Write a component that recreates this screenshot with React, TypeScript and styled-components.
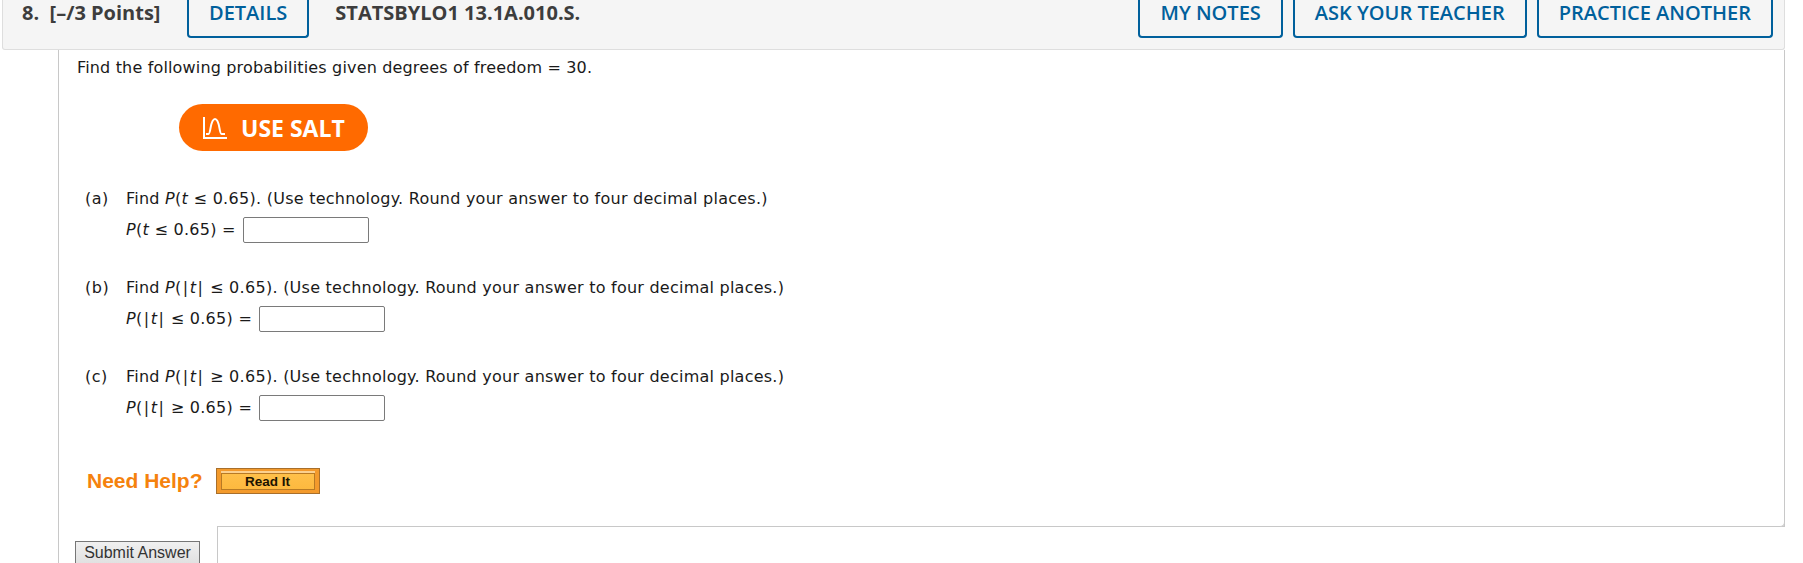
import styled, { createGlobalStyle } from "styled-components";

const Global = createGlobalStyle`
  html, body {
    margin: 0;
    background: #fff;
    overflow: hidden;
  }
`;

const Page = styled.div`
  width: 1803px;
  height: 563px;
  overflow: hidden;
  position: relative;
  box-sizing: border-box;
  padding-left: 2px;
  font-family: "DejaVu Sans", sans-serif;
  font-size: 16px;
  color: #1a1a1a;
`;

const Header = styled.header`
  width: 1783px;
  height: 50px;
  box-sizing: border-box;
  background: #f5f5f5;
  border: 1px solid #dedede;
  border-top: none;
  border-radius: 0 0 3px 3px;
  display: flex;
  align-items: flex-start;
  font-family: "Open Sans", sans-serif;
  font-size: 20px;
  font-weight: 600;
`;

const Points = styled.div`
  margin-left: 19px;
  width: 165px;
  line-height: 26px;
  font-weight: 700;
  color: #3d3d3d;
  white-space: pre;
`;

const Code = styled.div`
  margin-left: 26px;
  line-height: 26px;
  font-weight: 700;
  color: #3d3d3d;
  flex: 1;
`;

const HeadButton = styled.div`
  box-sizing: border-box;
  height: 38px;
  margin-right: 10px;
  padding: 0 20px;
  border: 2px solid #00609c;
  border-top: none;
  border-radius: 0 0 4px 4px;
  color: #00609c;
  line-height: 26px;
  &:last-child {
    margin-right: 11px;
  }
  &:nth-child(2) {
    margin-right: 0;
  }
`;

const Panel = styled.main`
  margin-left: 56px;
  width: 1727px;
  height: 513px;
  box-sizing: border-box;
  border-left: 1px solid #c8c8c8;
  border-right: 1px solid #c8c8c8;
  padding: 4px 0 0 18px;
`;

const Line = styled.p`
  margin: 0;
  line-height: 28px;
  letter-spacing: 0.16px;
  white-space: pre;
`;

const SaltButton = styled.div`
  margin: 22px 0 31.5px 102px;
  width: 189px;
  height: 47px;
  border-radius: 24px;
  background: #ff6a00;
  color: #fff;
  display: flex;
  align-items: center;
  padding-left: 24px;
  box-sizing: border-box;
  gap: 14px;
  font-family: "Open Sans", sans-serif;
  font-weight: 700;
  font-size: 23px;
`;

const Part = styled.section`
  display: grid;
  grid-template-columns: 41px auto;
  margin-left: 8px;
  margin-bottom: 26px;
`;

const Label = styled.span`
  line-height: 31px;
  letter-spacing: 0.5px;
`;

const Question = styled.div`
  line-height: 31px;
  letter-spacing: 0.24px;
  white-space: pre;
`;

const MathText = styled.span`
  letter-spacing: 0.3px;
`;

const Bar = styled.span`
  padding: 0 1.25px;
`;

const AnswerRow = styled.div`
  grid-column: 2;
  display: flex;
  align-items: center;
  height: 32px;
  letter-spacing: 0.28px;
  white-space: pre;
`;

const AnswerBox = styled.span`
  display: block;
  width: 126px;
  height: 26px;
  box-sizing: border-box;
  margin-left: 7px;
  border: 1px solid #7a7a7a;
  border-radius: 2px;
  background: #fff;
`;

const HelpRow = styled.div`
  display: flex;
  align-items: center;
  margin: 44px 0 0 10px;
  gap: 13px;
`;

const HelpText = styled.span`
  font-family: "Liberation Sans", sans-serif;
  font-size: 21px;
  font-weight: 700;
  color: #f5820d;
`;

const ReadIt = styled.div`
  width: 104px;
  height: 26px;
  box-sizing: border-box;
  border: 1px solid #a86f2b;
  background: #f39a2c;
  padding: 4px 4px 3px;
  display: flex;
`;

const ReadItInner = styled.div`
  flex: 1;
  border: 1px solid #b87a24;
  background: linear-gradient(#ffc04a, #fdb93f);
  box-shadow: 0 -2px 0 #fbd08f;
  font-family: "Liberation Sans", sans-serif;
  font-size: 13.5px;
  font-weight: 700;
  color: #1c1300;
  text-align: center;
  line-height: 16px;
`;

const Footer = styled.div`
  position: absolute;
  left: 217px;
  top: 526px;
  width: 1568px;
  height: 60px;
  box-sizing: border-box;
  border-top: 1px solid #c8c8c8;
  border-left: 1px solid #c8c8c8;
  background: #fff;
`;

const PanelCorner = styled.div`
  position: absolute;
  left: 1777px;
  top: 519px;
  width: 8px;
  height: 8px;
  box-sizing: border-box;
  border-right: 1px solid #c8c8c8;
  border-bottom: 1px solid #c8c8c8;
  border-radius: 0 0 5px 0;
  background: #fff;
`;

const Submit = styled.button`
  position: absolute;
  left: 75px;
  top: 541px;
  width: 125px;
  height: 30px;
  padding: 0 0 6px;
  border: 1px solid #767676;
  background: linear-gradient(#f0f0f0, #dcdcdc);
  font-family: "Liberation Sans", sans-serif;
  font-size: 16px;
  color: #333;
`;

const Em = styled.i``;

function SaltIcon() {
  return (
    <svg width="24" height="22" viewBox="0 0 24 22" fill="none" stroke="#fff" strokeWidth="2">
      <path d="M1 0v21h23" />
      <path d="M3 17h2.5c2.5 0 1.5-15 6.5-15s4 15 6.5 15H22" />
    </svg>
  );
}

const parts = [
  { label: "(a)", expr: <><Em>t</Em> ≤ 0.65</> },
  { label: "(b)", expr: <><Bar>|</Bar><Em>t</Em><Bar>|</Bar> ≤ 0.65</> },
  { label: "(c)", expr: <><Bar>|</Bar><Em>t</Em><Bar>|</Bar> ≥ 0.65</> },
];

export default function App() {
  return (
    <Page>
      <Global />
      <Header>
        <Points>8.  [–/3 Points]</Points>
        <HeadButton>DETAILS</HeadButton>
        <Code>STATSBYLO1 13.1A.010.S.</Code>
        <HeadButton>MY NOTES</HeadButton>
        <HeadButton>ASK YOUR TEACHER</HeadButton>
        <HeadButton>PRACTICE ANOTHER</HeadButton>
      </Header>
      <Panel>
        <Line>Find the following probabilities given degrees of freedom = 30.</Line>
        <SaltButton>
          <SaltIcon />
          USE SALT
        </SaltButton>
        {parts.map((p) => (
          <Part key={p.label}>
            <Label>{p.label}</Label>
            <Question>
              Find <MathText><Em>P</Em>({p.expr}).</MathText> (Use technology. Round your answer to four decimal places.)
            </Question>
            <AnswerRow>
              <Em>P</Em>({p.expr}) =<AnswerBox />
            </AnswerRow>
          </Part>
        ))}
        <HelpRow>
          <HelpText>Need Help?</HelpText>
          <ReadIt>
            <ReadItInner>Read It</ReadItInner>
          </ReadIt>
        </HelpRow>
      </Panel>
      <Footer />
      <PanelCorner />
      <Submit>Submit Answer</Submit>
    </Page>
  );
}
